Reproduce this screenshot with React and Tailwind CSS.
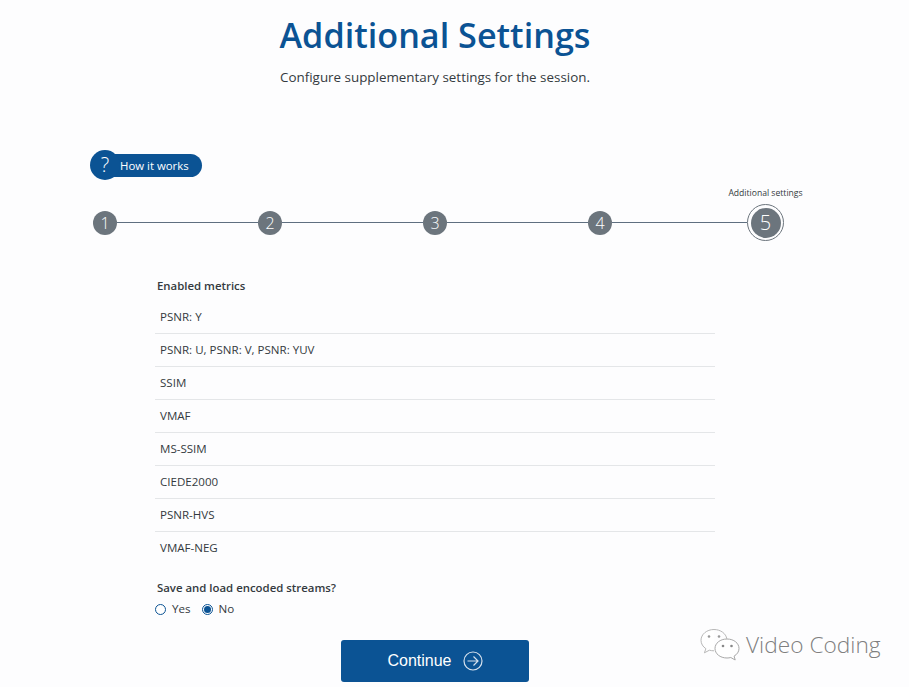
import React from "react";

const metrics = ["PSNR: Y", "PSNR: U, PSNR: V, PSNR: YUV", "SSIM", "VMAF", "MS-SSIM", "CIEDE2000", "PSNR-HVS", "VMAF-NEG"];

function Step({ n }) {
  return (
    <div className="w-6 h-6 rounded-full bg-[#6c757d] text-white text-[16px] font-light leading-6 text-center shrink-0">{n}</div>
  );
}

function Line({ w }) {
  return <div className={w}><div className="h-px bg-[#5f6f80]" /></div>;
}

function Bubbles() {
  return (
    <svg width="42" height="34" viewBox="0 0 42 34" fill="none" className="shrink-0">
      <path d="M15 1.5C7.8 1.5 2 6.3 2 12.3c0 3.400 1.900 6.400 4.900 8.400L5.400 24.800l5-2.600c1.400.4 3 .6 4.600.6" fill="#fff" stroke="#b8b8b8" strokeWidth="1" />
      <path d="M15 1.500c6.500 0 12 4 12.800 9.300" stroke="#b8b8b8" strokeWidth="1" />
      <circle cx="10" cy="8.500" r="1.300" fill="#999" />
      <circle cx="20" cy="8.500" r="1.300" fill="#999" />
      <path d="M28 11C21 11 16 15.300 16 20.500S21 30 28 30c1.300 0 2.600-.2 3.800-.5l4.400 2.500-1.100-3.900C38 26.500 40 23.700 40 20.500 40 15.300 35 11 28 11Z" fill="#fff" stroke="#a8a8a8" strokeWidth="1" />
      <circle cx="24" cy="18" r="1.300" fill="#888" />
      <circle cx="32.500" cy="18" r="1.300" fill="#888" />
    </svg>
  );
}

export default function App() {
  return (
    <div className="relative w-[909px] h-[687px] overflow-hidden bg-[#fdfdfe] font-['Open_Sans','Noto_Sans',sans-serif] text-[#343a40]">
      <div className="w-[870px] flex flex-col">
        <h1 className="mt-[12px] text-center text-[34.2px] leading-[46px] font-semibold text-[#0b5394]">Additional Settings</h1>
        <p className="mt-[8px] text-center text-[13.4px] leading-[22px] text-[#343a40]">Configure supplementary settings for the session.</p>

        <div className="mt-[61px] ml-[90px] flex items-center h-[32px]">
          <div className="w-[30px] h-[30px] rounded-full bg-[#0b5394] text-white text-[20px] font-light leading-[30px] text-center shrink-0 z-10">?</div>
          <div className="-ml-[10px] w-[92px] h-[23px] rounded-r-full bg-[#0b5394] text-white text-[11.4px] leading-[23px] pl-[10px] whitespace-nowrap">How it works</div>
        </div>

        <div className="relative mt-[23px] ml-[93px] flex items-center h-[37px]">
          <Step n={1} />
          <Line w="w-[141px]" />
          <Step n={2} />
          <Line w="w-[141px]" />
          <Step n={3} />
          <Line w="w-[141px]" />
          <Step n={4} />
          <Line w="w-[135px]" />
          <div className="relative w-[37px] h-[37px] rounded-full border border-[#6c757d] p-[2.5px] shrink-0">
            <div className="w-full h-full rounded-full bg-[#6c757d] text-white text-[20px] font-light leading-[30px] text-center">5</div>
            <div className="absolute left-1/2 -translate-x-1/2 -top-[18px] whitespace-nowrap text-[8.6px] leading-[13px] text-[#343a40]">Additional settings</div>
          </div>
        </div>

        <div className="mt-[36px] ml-[155px] w-[560px]">
          <div className="pl-[2px] text-[11.4px] leading-[18px] font-semibold text-[#343a40]">Enabled metrics</div>
          <ul className="mt-[6px] flex flex-col">
            {metrics.map((m, i) => (
              <li key={m} className={`h-[33px] pl-[5px] text-[11.55px] leading-[32px] text-[#343a40] ${i < metrics.length - 1 ? "border-b border-[#e4e6e8]" : ""}`}>{m}</li>
            ))}
          </ul>
          <div className="mt-[14px] pl-[2px] text-[11.4px] leading-[18px] font-semibold text-[#343a40]">Save and load encoded streams?</div>
          <div className="mt-[3px] flex items-center text-[11.6px] leading-[18px]">
            <span className="w-[11px] h-[11px] rounded-full border border-[#0b5394] bg-white shrink-0" />
            <span className="ml-[6px]">Yes</span>
            <span className="ml-[11px] w-[11px] h-[11px] rounded-full border border-[#0b5394] p-[1px] shrink-0"><span className="block w-full h-full rounded-full bg-[#0b5394]" /></span>
            <span className="ml-[6px]">No</span>
          </div>
        </div>

        <button className="mt-[22px] self-center w-[188px] h-[42px] rounded-[3px] bg-[#0b5394] text-white font-['Liberation_Sans',sans-serif] text-[16px] flex items-center justify-center gap-[11px]">
          Continue
          <svg width="20" height="20" viewBox="0 0 20 20" fill="none" stroke="#d5e0ec" strokeWidth="1.200">
            <circle cx="10" cy="10" r="9" />
            <path d="M4.500 10h10.500M10.500 5.500 15 10l-4.500 4.500" />
          </svg>
        </button>
      </div>

      <div className="absolute left-[699px] top-[628px] flex items-center">
        <Bubbles />
        <span className="ml-[5px] text-[22.7px] leading-[32px] font-['Open_Sans',sans-serif] font-light text-[#7f7f7f] whitespace-nowrap [text-shadow:1px_1px_1px_#fff]">Video Coding</span>
      </div>
    </div>
  );
}
